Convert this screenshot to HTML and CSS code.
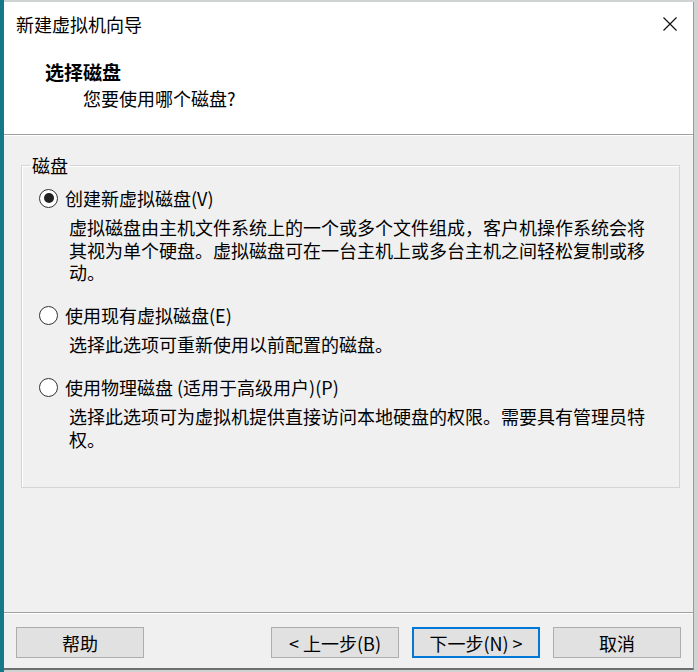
FILE: index.html
```html
<!DOCTYPE html>
<html lang="zh-CN">
<head>
<meta charset="utf-8">
<title>新建虚拟机向导</title>
<link rel="stylesheet" href="styles.css">
</head>
<body>
<div class="window">
  <div class="titlebar">
    <span class="title">新建虚拟机向导</span>
    <svg class="close" width="16" height="16" viewBox="0 0 16 16" aria-hidden="true">
      <path d="M1.5 1.5 L14.5 14.5 M14.5 1.5 L1.5 14.5" stroke="#111" stroke-width="1.2" fill="none"/>
    </svg>
  </div>
  <div class="header">
    <div class="h-title">选择磁盘</div>
    <div class="h-sub">您要使用哪个磁盘?</div>
  </div>
  <div class="content">
    <fieldset class="group">
      <legend>磁盘</legend>
      <div class="option">
        <div class="opt-row"><span class="radio checked"></span><span>创建新虚拟磁盘(V)</span></div>
        <p class="desc">虚拟磁盘由主机文件系统上的一个或多个文件组成，客户机操作系统会将其视为单个硬盘。虚拟磁盘可在一台主机上或多台主机之间轻松复制或移动。</p>
      </div>
      <div class="option">
        <div class="opt-row"><span class="radio"></span><span>使用现有虚拟磁盘(E)</span></div>
        <p class="desc">选择此选项可重新使用以前配置的磁盘。</p>
      </div>
      <div class="option">
        <div class="opt-row"><span class="radio"></span><span>使用物理磁盘 (适用于高级用户)(P)</span></div>
        <p class="desc">选择此选项可为虚拟机提供直接访问本地硬盘的权限。需要具有管理员特权。</p>
      </div>
    </fieldset>
  </div>
  <div class="footer">
    <button class="btn help">帮助</button>
    <button class="btn">&lt; 上一步(B)</button>
    <button class="btn default">下一步(N) &gt;</button>
    <button class="btn">取消</button>
  </div>
</div>
</body>
</html>
```
FILE: styles.css
```css
html, body {
  margin: 0;
  padding: 0;
}
body {
  width: 698px;
  height: 672px;
  overflow: hidden;
  background: linear-gradient(90deg, #16798a 0 4px, #cfd3d4 4px);
  font-family: "Noto Sans CJK SC", "Noto Sans", sans-serif;
  font-size: 18px;
  color: #000;
}
.window {
  margin: 2px 0 0 4px;
  width: 690px;
  height: 668px;
  display: flex;
  flex-direction: column;
  background: #f0f0f0;
  border-right: 1px solid #9a9a9a;
  border-bottom: 2px solid #6e6e6e;
  box-sizing: border-box;
}
.titlebar {
  height: 44px;
  background: #fff;
  display: flex;
  align-items: center;
  justify-content: space-between;
  padding: 0 15px 0 12px;
}
.title {
  font-size: 18px;
  line-height: 24px;
}
.close {
  display: block;
}
.header {
  background: #fff;
  padding: 13px 0 23px 0;
  border-bottom: 1px solid #a0a0a0;
}
.h-title {
  font-weight: bold;
  font-size: 19px;
  line-height: 26px;
  padding-left: 41px;
}
.h-sub {
  line-height: 26px;
  padding-left: 79px;
}
.content {
  flex: 1;
  border-top: 1px solid #fff;
  display: flex;
  flex-direction: column;
}
.group {
  margin: 18px 13px 0 17px;
  padding: 10px 0 37px 17px;
  border: 1px solid #d5d5d5;
  box-shadow: inset 1px 1px 0 #fff;
  min-width: 0;
}
.group legend {
  padding: 0 2px;
  margin-left: -9px;
  line-height: 22px;
}
.option + .option {
  margin-top: 19.5px;
}
.opt-row {
  display: flex;
  align-items: center;
  gap: 7px;
  height: 24px;
  line-height: 24px;
}
.radio {
  width: 19px;
  height: 19px;
  box-sizing: border-box;
  border: 1.3px solid #333;
  border-radius: 50%;
  background: #fff;
  display: flex;
  align-items: center;
  justify-content: center;
  flex: none;
}
.radio.checked::after {
  content: "";
  width: 10px;
  height: 10px;
  border-radius: 50%;
  background: #222;
}
.desc {
  margin: 6px 0 0 30px;
  max-width: 585px;
  line-height: 22.5px;
}
.footer {
  height: 56px;
  box-sizing: border-box;
  border-top: 1px solid #a0a0a0;
  box-shadow: inset 0 1px 0 #fff;
  padding: 14px 12px 10px 12px;
  display: flex;
  gap: 13px;
}
.btn {
  width: 128px;
  height: 31px;
  box-sizing: border-box;
  background: #e1e1e1;
  border: 1px solid #adadad;
  font-family: "Noto Sans CJK SC", "Noto Sans", sans-serif;
  font-size: 18px;
  color: #000;
  padding: 0;
  line-height: 28px;
}
.btn.help {
  margin-right: auto;
}
.btn.default {
  border: 1px solid #0078d7;
  box-shadow: inset 0 0 0 1px #0078d7;
}
```
